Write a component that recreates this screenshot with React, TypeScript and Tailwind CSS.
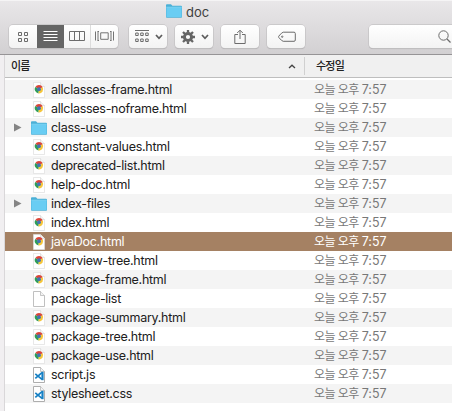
type Kind = 'html' | 'folder' | 'file' | 'code';

const files: { name: string; kind: Kind; selected?: boolean }[] = [
  { name: 'allclasses-frame.html', kind: 'html' },
  { name: 'allclasses-noframe.html', kind: 'html' },
  { name: 'class-use', kind: 'folder' },
  { name: 'constant-values.html', kind: 'html' },
  { name: 'deprecated-list.html', kind: 'html' },
  { name: 'help-doc.html', kind: 'html' },
  { name: 'index-files', kind: 'folder' },
  { name: 'index.html', kind: 'html' },
  { name: 'javaDoc.html', kind: 'html', selected: true },
  { name: 'overview-tree.html', kind: 'html' },
  { name: 'package-frame.html', kind: 'html' },
  { name: 'package-list', kind: 'file' },
  { name: 'package-summary.html', kind: 'html' },
  { name: 'package-tree.html', kind: 'html' },
  { name: 'package-use.html', kind: 'html' },
  { name: 'script.js', kind: 'code' },
  { name: 'stylesheet.css', kind: 'code' },
];

function Folder() {
  return (
    <svg width="16" height="14" viewBox="0 0 16 14">
      <path d="M0 1.2Q0 .3 .9 .3H5l1.4 1.5H15q1 0 1 1V13q0 .8-.8.8H.8Q0 13.800 0 13z" fill="#4bb0d6" />
      <path d="M.4 3.300H15.600V13H.4z" fill="#69cdf3" />
      <path d="M.3 3.200H15.700" stroke="#8bdcfa" strokeWidth=".7" />
    </svg>
  );
}

function Page({ kind }: { kind: Kind }) {
  const html = kind === 'html';
  return (
    <svg width="12" height="16" viewBox="0 0 12 16">
      <path
        d="M.5 .5H7.500L11.500 4.500V15.500H.5z"
        fill="#fff"
        stroke={html ? '#dedede' : kind === 'code' ? '#a5a5a5' : '#b9b9b9'}
        strokeWidth={html ? 0.7 : 0.9}
      />
      <path d="M7.500 .5V4.500H11.500" fill="#f3f3f3" stroke={html ? '#d8d8d8' : '#b0b0b0'} strokeWidth=".7" />
      {html && (
        <g>
          <path d="M6 7.200L2.300 5.100A4.200 4.200 0 0 1 9.700 5.200z" fill="#dc4437" />
          <path d="M6 7.200L2.300 5.100A4.200 4.200 0 0 0 5.500 11.400z" fill="#2f9d57" />
          <path d="M6 7.200L9.700 5.200A4.200 4.200 0 0 1 5.500 11.400z" fill="#f6c63a" />
          <circle cx="6" cy="7.200" r="1.900" fill="#4472b4" />
        </g>
      )}
      {kind === 'code' && (
        <g fill="none" stroke="#1680c4">
          <path d="M2.300 6.800L9 12.300M2.300 11.300L9 5.600" strokeWidth="1.700" />
          <path d="M9.500 4.800V13.200" strokeWidth="2.200" />
        </g>
      )}
    </svg>
  );
}

function Chevron() {
  return (
    <svg width="8" height="6" viewBox="0 0 8 6" fill="none" stroke="#5c5c5c" strokeWidth="1.7">
      <path d="M1 1L4 4.300L7 1" />
    </svg>
  );
}

const button =
  'flex h-[23px] items-center justify-center rounded-[4px] bg-linear-to-b from-white to-[#f3f3f3] shadow-[0_0_0_.7px_#c5c3c5,0_1px_1px_#aaa8aa]';

function Toolbar() {
  return (
    <div className="flex h-[30px] pl-[9px]">
      <div className={`${button} w-[109px] overflow-hidden`}>
        <div className="flex h-full w-[28px] items-center justify-center">
          <svg width="12" height="12" viewBox="0 0 12 12" fill="none" stroke="#6c6c6c">
            <path d="M1.500 1.500h3v3h-3zM7.500 1.500h3v3h-3zM1.500 7.500h3v3h-3zM7.500 7.500h3v3h-3z" />
          </svg>
        </div>
        <div className="flex h-full w-[27px] items-center justify-center bg-[#656565]">
          <svg width="15" height="11" viewBox="0 0 15 11" stroke="#fff">
            <path d="M.5 .5h14M.5 3.500h14M.5 6.500h14M.5 9.500h14" />
          </svg>
        </div>
        <div className="flex h-full w-[27px] items-center justify-center border-r border-[#dcdcdc]">
          <svg width="16" height="11" viewBox="0 0 16 11" fill="none" stroke="#6c6c6c">
            <path d="M.5 .5h15v9H.5zM5.500 .5v9M10.500 .5v9" />
          </svg>
        </div>
        <div className="flex h-full w-[27px] items-center justify-center">
          <svg width="19" height="11" viewBox="0 0 19 11" fill="none" stroke="#747474">
            <path d="M.5 .5v9M18.500 .5v9M2.500 .5h1.500M2.500 9.500h1.500M3 .5v9M16 .5v9M15 .5h1.500M15 9.500h1.500M5.700 1.800h7.500v6.500H5.700z" />
          </svg>
        </div>
      </div>
      <div className={`${button} ml-[11px] w-[38px] gap-[6px] pl-px`}>
        <svg width="14" height="13" viewBox="0 0 14 13" fill="none" stroke="#6c6c6c">
          <path d="M0 .5h14M.7 3h2.500v2.500H.7zM5.700 3h2.500v2.500H5.700zM10.700 3h2.500v2.500h-2.500zM.7 9h2.500v2.500H.7zM5.700 9h2.500v2.500H5.700zM10.700 9h2.500v2.500h-2.500z" />
        </svg>
        <Chevron />
      </div>
      <div className={`${button} ml-[8px] w-[38px] gap-[6px] pl-px`}>
        <svg width="14" height="14" viewBox="0 0 14 14" fill="none" stroke="#656565">
          <circle cx="7" cy="7" r="3.600" strokeWidth="3" />
          <path
            d="M7 0v2.500M7 11.500V14M0 7h2.500M11.500 7H14M2 2l2 2M10 10l2 2M12 2l-2 2M4 10l-2 2"
            strokeWidth="2.300"
          />
        </svg>
        <Chevron />
      </div>
      <div className={`${button} ml-[8px] w-[38px] pr-px`}>
        <svg width="12" height="16" viewBox="0 0 12 16" fill="none" stroke="#6c6c6c">
          <path d="M4 5.500H.8v9h10.400v-9H8M6 10V1.500M3.200 4L6 1.200L8.800 4" />
        </svg>
      </div>
      <div className={`${button} ml-[8px] w-[38px] pl-px`}>
        <svg width="18" height="12" viewBox="0 0 18 12" fill="none" stroke="#6c6c6c">
          <path d="M5.200 1.200H16q1.300 0 1.300 1.300v6.500q0 1.300-1.300 1.300H5.200Q4 10.300 .8 6.500Q.3 5.800 .8 5.100Q4 1.200 5.200 1.200z" />
          <circle cx="4.200" cy="5.700" r=".7" />
        </svg>
      </div>
      <div className="ml-[64px] flex h-[23px] flex-1 items-center rounded-l-[4px] bg-linear-to-b from-white to-[#f3f3f3] pl-[69px] shadow-[0_0_0_.7px_#c5c3c5,0_1px_1px_#aaa8aa]">
        <svg width="13" height="13" viewBox="0 0 13 13" fill="none" stroke="#6c6c6c">
          <circle cx="5.500" cy="5.500" r="4.700" />
          <path d="M9 9l3.500 3.500" strokeWidth="1.300" />
        </svg>
      </div>
    </div>
  );
}

export default function App() {
  return (
    <div className="flex h-[411px] w-[452px] flex-col overflow-hidden bg-white font-['Inter','Noto_Sans_CJK_KR',sans-serif] text-[12.5px] text-[#202020]">
      <header className="h-[55px] shrink-0 border-t border-b border-t-[#f5f4f5] border-b-[#969496] bg-linear-to-b from-[#e9e7e9] to-[#d2d0d2]">
        <div className="flex h-[24px] items-start gap-[4px] pt-[3px] pl-[166px]">
          <Folder />
          <span className="text-[13px] leading-[16px] text-[#404040]">doc</span>
        </div>
        <Toolbar />
      </header>
      <div className="flex min-h-0 flex-1">
        <aside className="w-[5px] shrink-0 border-r border-[#d9d7d9] bg-[#f1eff1]" />
        <main className="min-w-0 flex-1">
          <div className="flex h-[23px] items-center border-b border-[#bebebe] bg-[#f0f0f0] text-[11px] font-medium tracking-[-.8px]">
            <span className="w-[283px] pl-[6px]">이름</span>
            <svg width="8" height="5" viewBox="0 0 8 5" fill="none" stroke="#444" strokeWidth="1.300">
              <path d="M1 4L4 1.200L7 4" />
            </svg>
            <span className="ml-[8px] h-[18px] w-px bg-[#d0d0d0]" />
            <span className="ml-[11px]">수정일</span>
          </div>
          <div className="pt-[2px]">
            {files.map((f, i) => (
              <div
                key={f.name}
                className={`flex h-[19px] items-center ${f.selected ? 'bg-[#a58163] text-white' : i % 2 ? 'bg-white' : 'bg-[#f4f4f4]'}`}
              >
                <span className="flex w-[25px] pl-[9px]">
                  {f.kind === 'folder' && (
                    <svg width="8" height="9" viewBox="0 0 8 9">
                      <path d="M0 .5L7.500 4.500L0 8.500z" fill="#858585" />
                    </svg>
                  )}
                </span>
                <span className="flex w-[21px] justify-center pr-[3px]">
                  {f.kind === 'folder' ? <Folder /> : <Page kind={f.kind} />}
                </span>
                <span className="w-[263px] leading-[19px] tracking-[-.27px] whitespace-nowrap">{f.name}</span>
                <span
                  className={`leading-[19px] whitespace-nowrap ${f.selected ? 'text-white' : 'text-[#787878]'}`}
                >
                  <span className="text-[12px] tracking-[-.55px]">오늘 오후 </span>7:57
                </span>
              </div>
            ))}
          </div>
        </main>
      </div>
    </div>
  );
}
